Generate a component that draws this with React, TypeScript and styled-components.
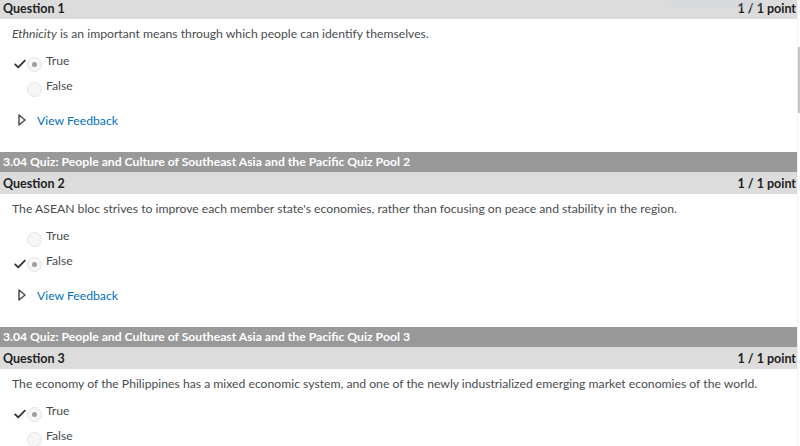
import React from "react";
import styled, { createGlobalStyle } from "styled-components";

const Global = createGlobalStyle`
  html, body { margin: 0; padding: 0; background: #fff; overflow: hidden; }
  body { font-family: Lato, "Noto Sans", sans-serif; color: #494c4e; }
`;

const Frame = styled.div`
  display: flex;
  align-items: flex-start;
  width: 800px;
  height: 446px;
  overflow: hidden;
  position: relative;
`;

const Page = styled.div`
  width: 797px;
  flex-shrink: 0;
  margin-top: -3px;
  display: flex;
  flex-direction: column;
  & > * { flex-shrink: 0; }
`;

const ScrollTrack = styled.div`
  width: 3px;
  height: 446px;
  box-sizing: border-box;
  border-left: 1px solid #f0f0f0;
  display: flex;
  flex-direction: column;
`;

const ScrollThumb = styled.div`
  margin-top: 47px;
  height: 66px;
  width: 2px;
  background: #c4c4c4;
`;

const SectionBar = styled.div`
  height: 20px;
  background: #999999;
  color: #ffffff;
  font-weight: 700;
  font-size: 12.2px;
  line-height: 20px;
  padding-left: 3px;
  margin-top: 24px;
  white-space: nowrap;
`;

const QuestionHeader = styled.div`
  height: 22px;
  background: #dcdcdc;
  color: #222;
  font-weight: 700;
  font-size: 12.5px;
  display: flex;
  align-items: center;
  justify-content: space-between;
  padding: 0 1px 0 3px;
`;

const Body = styled.div`
  padding-left: 12px;
  display: flex;
  flex-direction: column;
`;

const Prompt = styled.p`
  margin: 0;
  margin-top: 7px;
  font-size: 12.2px;
  line-height: 16px;
  color: #494c4e;
  white-space: nowrap;
`;

const Options = styled.div`
  display: flex;
  flex-direction: column;
  gap: 9px;
  margin-top: 12px;
`;

const OptionRow = styled.div`
  display: flex;
  align-items: center;
  height: 16px;
  font-size: 12.2px;
`;

const CheckSlot = styled.span`
  width: 14px;
  height: 16px;
  display: flex;
  align-items: center;
  justify-content: center;
  margin-left: 1px;
  padding-top: 3px;
  box-sizing: border-box;
`;

const Radio = styled.span<{ $on?: boolean }>`
  width: 15px;
  height: 15px;
  border-radius: 50%;
  background: #f6f6f6;
  border: 1px solid #e4e4e4;
  box-sizing: border-box;
  margin-top: 4px;
  display: flex;
  align-items: center;
  justify-content: center;
  &::after {
    content: "";
    width: 5px;
    height: 5px;
    border-radius: 50%;
    background: ${(p) => (p.$on ? "#9e9e9e" : "transparent")};
  }
`;

const OptionLabel = styled.span`
  margin-left: 4px;
  margin-top: -4px;
  color: #494c4e;
`;

const Feedback = styled.div`
  display: flex;
  align-items: center;
  margin-top: 17px;
  height: 16px;
  padding-left: 6px;
  gap: 11px;
`;

const FeedbackLink = styled.span`
  color: #006fbf;
  font-size: 12.2px;
`;

const Ghost = styled.div`
  position: absolute;
  top: -2px;
  left: 671px;
  width: 90px;
  height: 10px;
  background: rgba(200, 210, 222, 0.22);
  border-radius: 2px;
`;

const Check = () => (
  <svg width="12" height="10" viewBox="0 0 12 10">
    <path d="M1.2 5.4 L4.2 8.4 L10.8 1.6" fill="none" stroke="#333" strokeWidth="1.8" strokeLinecap="round" strokeLinejoin="round" />
  </svg>
);

const Tri = () => (
  <svg width="8" height="12" viewBox="0 0 8 12">
    <path d="M1 1 L7 6 L1 11 Z" fill="none" stroke="#494c4e" strokeWidth="1.5" strokeLinejoin="round" />
  </svg>
);

type Q = {
  n: number;
  prompt: React.ReactNode;
  answer: "True" | "False";
  section?: string;
  feedback: boolean;
};

const SECTION = "3.04 Quiz: People and Culture of Southeast Asia and the Pacific Quiz Pool";

const questions: Q[] = [
  {
    n: 1,
    prompt: (
      <>
        <em>Ethnicity</em> is an important means through which people can identify themselves.
      </>
    ),
    answer: "True",
    feedback: true,
  },
  {
    n: 2,
    section: `${SECTION} 2`,
    prompt:
      "The ASEAN bloc strives to improve each member state's economies, rather than focusing on peace and stability in the region.",
    answer: "False",
    feedback: true,
  },
  {
    n: 3,
    section: `${SECTION} 3`,
    prompt:
      "The economy of the Philippines has a mixed economic system, and one of the newly industrialized emerging market economies of the world.",
    answer: "True",
    feedback: false,
  },
];

export default function App() {
  return (
    <>
      <Global />
      <Frame>
        <Page>
          {questions.map((q) => (
            <React.Fragment key={q.n}>
              {q.section && <SectionBar>{q.section}</SectionBar>}
              <QuestionHeader>
                <span>Question {q.n}</span>
                <span>1 / 1 point</span>
              </QuestionHeader>
              <Body>
                <Prompt>{q.prompt}</Prompt>
                <Options>
                  {(["True", "False"] as const).map((opt) => (
                    <OptionRow key={opt}>
                      <CheckSlot>{q.answer === opt ? <Check /> : null}</CheckSlot>
                      <Radio $on={q.answer === opt} />
                      <OptionLabel>{opt}</OptionLabel>
                    </OptionRow>
                  ))}
                </Options>
                {q.feedback && (
                  <Feedback>
                    <Tri />
                    <FeedbackLink>View Feedback</FeedbackLink>
                  </Feedback>
                )}
              </Body>
            </React.Fragment>
          ))}
        </Page>
        <ScrollTrack>
          <ScrollThumb />
        </ScrollTrack>
        <Ghost />
      </Frame>
    </>
  );
}
